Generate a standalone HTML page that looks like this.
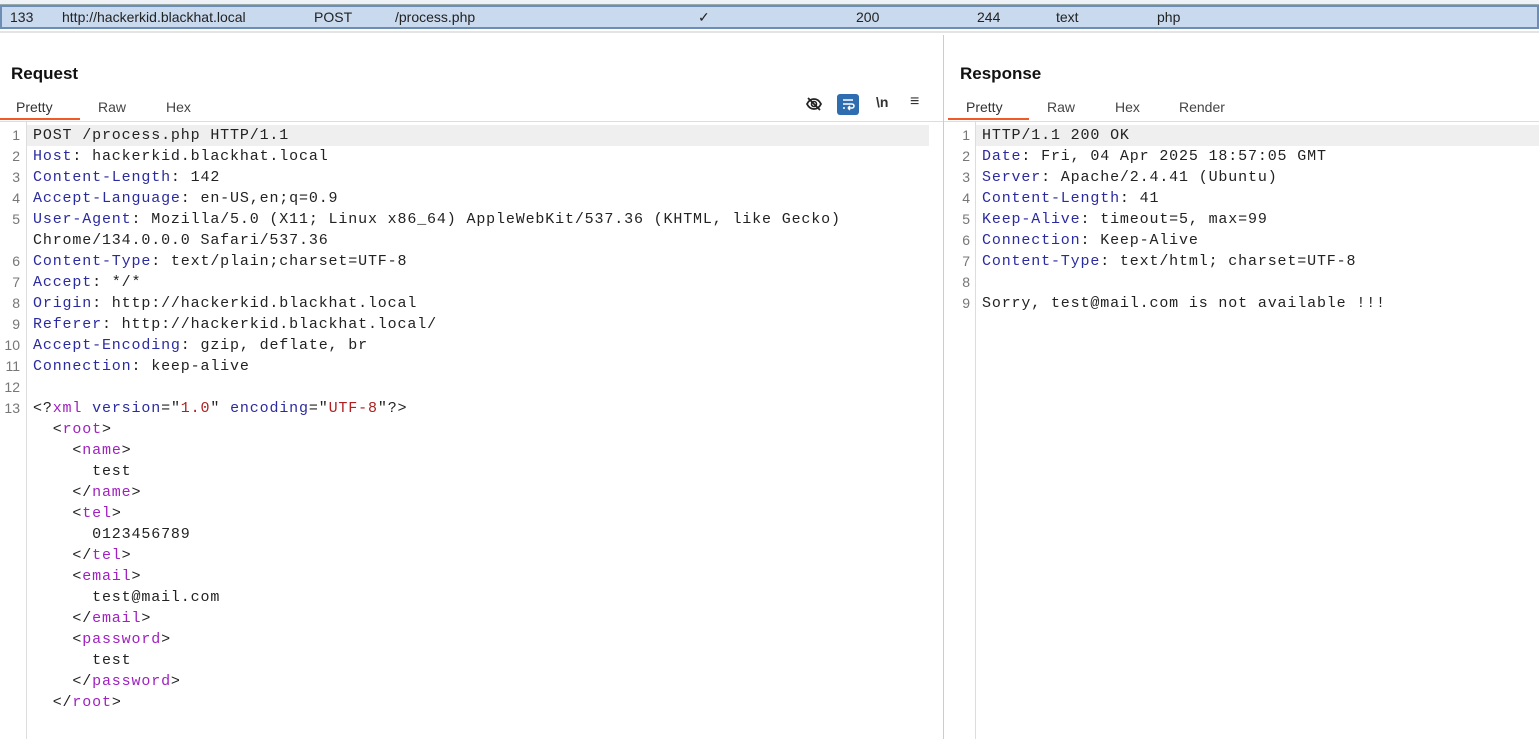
<!DOCTYPE html>
<html><head><style>
body{margin:0;width:1539px;height:739px;background:#fff;overflow:hidden;position:relative;font-family:"Liberation Sans",sans-serif;color:#222}
.a{position:absolute}
.row{font-size:14px;white-space:pre}
.h{font-size:17px;font-weight:bold;color:#111}
.tab{font-size:14px;color:#444}
.code{font-family:"Liberation Mono",monospace;font-size:15px;letter-spacing:.85px;white-space:pre;line-height:21px}
.ln{font-family:"Liberation Sans",sans-serif;font-size:14px;color:#777;text-align:right;width:20px;line-height:21px;white-space:pre}
.k{color:#2b2ba0}.t{color:#a020c0}.s{color:#b02020}
</style></head><body>
<div class="a" style="left:0;top:0;width:1539px;height:4px;background:#eef2f7;border-bottom:1px solid #9aa"></div>
<div class="a row" style="left:0;top:5px;width:1535px;height:20px;background:#c9d9ee;border:2px solid #6d8db5;line-height:20px"><span class="a" style="left:8px">133</span><span class="a" style="left:60px">http://hackerkid.blackhat.local</span><span class="a" style="left:312px">POST</span><span class="a" style="left:393px">/process.php</span><span class="a" style="left:696px">✓</span><span class="a" style="left:854px">200</span><span class="a" style="left:975px">244</span><span class="a" style="left:1054px">text</span><span class="a" style="left:1155px">php</span></div>
<div class="a" style="left:0;top:31px;width:1539px;height:2px;background:#e4e4e4"></div>
<div class="a" style="left:943px;top:35px;width:1px;height:704px;background:#ccc"></div>

<div class="a h" style="left:11px;top:64px">Request</div>
<div class="a tab" style="left:16px;top:99px;color:#333">Pretty</div>
<div class="a tab" style="left:98px;top:99px">Raw</div>
<div class="a tab" style="left:166px;top:99px">Hex</div>
<div class="a" style="left:0;top:118px;width:80px;height:2px;background:#f05a28"></div>
<div class="a" style="left:0;top:121px;width:943px;height:1px;background:#ddd"></div>
<svg class="a" style="left:805px;top:95px" width="18" height="18" viewBox="0 0 18 18"><path d="M2 9c2-4 5-5 7-5s5 1 7 5c-2 4-5 5-7 5s-5-1-7-5z" fill="none" stroke="#222" stroke-width="1.8"/><circle cx="9" cy="9" r="2.5" fill="none" stroke="#222" stroke-width="1.6"/><path d="M3 3l12 12" stroke="#222" stroke-width="1.8"/></svg>
<div class="a" style="left:837px;top:94px;width:22px;height:21px;background:#2e6db0;border-radius:3px"><svg width="22" height="21"><path d="M6 6h10M6 10h9a2 2 0 010 4h-4M6 14h2M11 14l2-2M11 14l2 2" stroke="#fff" stroke-width="1.5" fill="none"/></svg></div>
<div class="a" style="left:876px;top:94px;font-size:14px;font-weight:bold;color:#333">\n</div>
<div class="a" style="left:910px;top:93px;font-size:16px;color:#333">≡</div>
<div class="a" style="left:26px;top:122px;width:1px;height:617px;background:#ddd"></div>
<div class="a" style="left:27px;top:125px;width:902px;height:21px;background:#efefef"></div>
<div class="a ln" style="left:0;top:125px">1
2
3
4
5

6
7
8
9
10
11
12
13</div>
<div class="a code" style="left:33px;top:125px">POST /process.php HTTP/1.1
<span class="k">Host</span>: hackerkid.blackhat.local
<span class="k">Content-Length</span>: 142
<span class="k">Accept-Language</span>: en-US,en;q=0.9
<span class="k">User-Agent</span>: Mozilla/5.0 (X11; Linux x86_64) AppleWebKit/537.36 (KHTML, like Gecko)
Chrome/134.0.0.0 Safari/537.36
<span class="k">Content-Type</span>: text/plain;charset=UTF-8
<span class="k">Accept</span>: */*
<span class="k">Origin</span>: http://hackerkid.blackhat.local
<span class="k">Referer</span>: http://hackerkid.blackhat.local/
<span class="k">Accept-Encoding</span>: gzip, deflate, br
<span class="k">Connection</span>: keep-alive

&lt;?<span class="t">xml</span> <span class="k">version</span>="<span class="s">1.0</span>" <span class="k">encoding</span>="<span class="s">UTF-8</span>"?&gt;
  &lt;<span class="t">root</span>&gt;
    &lt;<span class="t">name</span>&gt;
      test
    &lt;/<span class="t">name</span>&gt;
    &lt;<span class="t">tel</span>&gt;
      0123456789
    &lt;/<span class="t">tel</span>&gt;
    &lt;<span class="t">email</span>&gt;
      test@mail.com
    &lt;/<span class="t">email</span>&gt;
    &lt;<span class="t">password</span>&gt;
      test
    &lt;/<span class="t">password</span>&gt;
  &lt;/<span class="t">root</span>&gt;</div>

<div class="a h" style="left:960px;top:64px">Response</div>
<div class="a tab" style="left:966px;top:99px;color:#333">Pretty</div>
<div class="a tab" style="left:1047px;top:99px">Raw</div>
<div class="a tab" style="left:1115px;top:99px">Hex</div>
<div class="a tab" style="left:1179px;top:99px">Render</div>
<div class="a" style="left:948px;top:118px;width:81px;height:2px;background:#f05a28"></div>
<div class="a" style="left:944px;top:121px;width:595px;height:1px;background:#ddd"></div>
<div class="a" style="left:975px;top:122px;width:1px;height:617px;background:#ddd"></div>
<div class="a" style="left:976px;top:125px;width:563px;height:21px;background:#efefef"></div>
<div class="a ln" style="left:950px;top:125px">1
2
3
4
5
6
7
8
9</div>
<div class="a code" style="left:982px;top:125px">HTTP/1.1 200 OK
<span class="k">Date</span>: Fri, 04 Apr 2025 18:57:05 GMT
<span class="k">Server</span>: Apache/2.4.41 (Ubuntu)
<span class="k">Content-Length</span>: 41
<span class="k">Keep-Alive</span>: timeout=5, max=99
<span class="k">Connection</span>: Keep-Alive
<span class="k">Content-Type</span>: text/html; charset=UTF-8

Sorry, test@mail.com is not available !!!</div>
</body></html>
